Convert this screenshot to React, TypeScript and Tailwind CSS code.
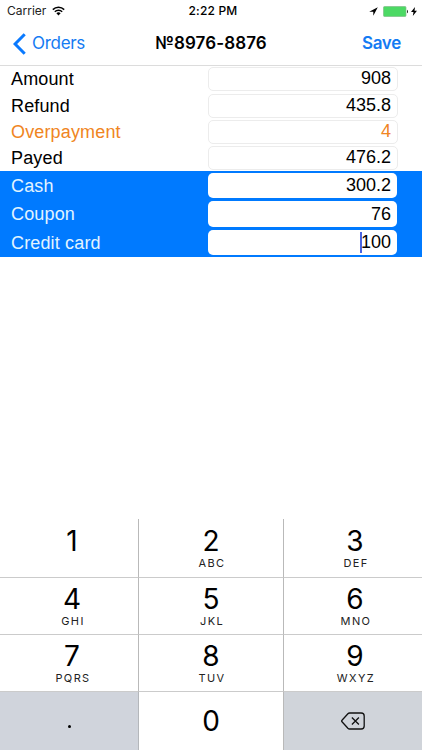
type Row = { label: string; value: string; warn?: boolean; focused?: boolean };

const totals: Row[] = [
  { label: "Amount", value: "908" },
  { label: "Refund", value: "435.8" },
  { label: "Overpayment", value: "4", warn: true },
  { label: "Payed", value: "476.2" },
];

const payments: Row[] = [
  { label: "Cash", value: "300.2" },
  { label: "Coupon", value: "76" },
  { label: "Credit card", value: "100", focused: true },
];

const keys = [
  ["1", ""],
  ["2", "ABC"],
  ["3", "DEF"],
  ["4", "GHI"],
  ["5", "JKL"],
  ["6", "MNO"],
  ["7", "PQRS"],
  ["8", "TUV"],
  ["9", "WXYZ"],
];

function StatusBar() {
  return (
    <div className="grid h-[22px] grid-cols-3 items-center text-[12px] leading-none text-black">
      <div className="flex items-center gap-[6px] pl-[7px]">
        <span className="text-[#222]">Carrier</span>
        <svg width="13" height="10" viewBox="0 0 13 10" fill="none" stroke="#000" strokeWidth="1.5">
          <path d="M.8 3.6a8.2 8.2 0 0 1 11.4 0" />
          <path d="M2.8 5.8a5.3 5.3 0 0 1 7.4 0" />
          <path d="M6.5 9.4 4.4 7.3a3 3 0 0 1 4.2 0z" fill="#000" stroke="none" />
        </svg>
      </div>
      <div className="pl-[4px] text-center font-medium tracking-[0.2px]">2:22 PM</div>
      <div className="flex items-center justify-end pr-[5px]">
        <svg width="9" height="9" viewBox="0 0 9 9" className="mr-[5px]">
          <path d="M8.8.2.2 4.7h4.1v4.1z" fill="#000" />
        </svg>
        <svg width="26" height="11" viewBox="0 0 26 11">
          <rect x=".5" y=".5" width="22.5" height="10" rx="1" fill="#4cd964" stroke="#7fbd88" strokeWidth=".7" />
          <path d="M24 3.7c1.3.5 1.3 3.1 0 3.6z" fill="#222" />
        </svg>
        <svg width="6" height="9" viewBox="0 0 6 9" className="ml-[2px]">
          <path d="M4 0 0 5h2.5L1.8 9 6 3.8H3.5z" fill="#000" />
        </svg>
      </div>
    </div>
  );
}

function NavBar() {
  return (
    <div className="grid h-11 grid-cols-3 items-center border-b border-[#dcdcdc] text-[17px] leading-none text-[#147bf3]">
      <div className="flex items-center gap-[6px] pl-[13px]">
        <svg width="13" height="22" viewBox="0 0 13 22" fill="none" stroke="#0a7aff" strokeWidth="3">
          <path d="M11.7 1.2 2.1 11l9.6 9.8" />
        </svg>
        <span className="tracking-[-0.3px]">Orders</span>
      </div>
      <div className="text-center font-semibold tracking-[0.1px] whitespace-nowrap text-black">№8976-8876</div>
      <div className="pr-[21px] text-right font-semibold tracking-[-0.3px]">Save</div>
    </div>
  );
}

function TotalRow({ label, value, warn }: Row) {
  return (
    <div className={`flex h-[26.4px] items-center justify-between pr-6 pl-[11px] ${warn ? "text-[#f08522]" : "text-black"}`}>
      <span className="pt-px tracking-[0.15px]">{label}</span>
      <div className="h-6 w-[190px] rounded-[5px] border border-[#ececec] bg-white pr-[6px] text-right leading-[21px]">
        {value}
      </div>
    </div>
  );
}

function PaymentRow({ label, value, focused }: Row) {
  return (
    <div className="flex h-[28.5px] items-center justify-between pr-[25px] pl-[11px] text-[#e2f4ff]">
      <span className="pt-[2px] tracking-[0.15px]">{label}</span>
      <div className="flex h-[25.5px] w-[189px] items-center justify-end rounded-[5px] bg-white pr-[6px] text-black">
        {focused && <span className="-mr-px h-[21px] w-[1.5px] bg-[#4a64e0]" />}
        <span className="leading-none">{value}</span>
      </div>
    </div>
  );
}

function Keypad() {
  return (
    <div className="grid h-[231px] grid-cols-[139px_145px_138px] grid-rows-[59px_57px_57px_58px] text-black">
      {keys.map(([digit, letters], i) => (
        <div
          key={digit}
          className={`flex flex-col items-center border-b border-[#cbcbcb] ${i < 3 ? "pt-[8px]" : "pt-[7px]"} ${
            i % 3 === 2 ? "pl-[4px]" : i % 3 === 1 ? "border-r border-r-[#b9b9b9]" : "border-r border-r-[#b9b9b9] pl-[6px]"
          }`}
        >
          <span className="text-[28px] leading-[28px]">{digit}</span>
          {letters && <span className="mt-[2px] pl-[2px] text-[11px] leading-[13px] tracking-[1.4px] text-[#222]">{letters}</span>}
        </div>
      ))}
      <div className="flex items-center justify-center border-r border-[#b4b7bb] bg-[#d0d4dc]">
        <span className="mt-[10px] h-[3px] w-[3px] rounded-full bg-black" />
      </div>
      <div className="flex items-center justify-center border-r border-[#b9b9b9] text-[28px] leading-none">0</div>
      <div className="flex items-center justify-center bg-[#d0d4da]">
        <svg width="24" height="18" viewBox="0 0 24 18" fill="none" stroke="#111" strokeWidth="1.3">
          <path d="M8.6 1h11.6a3 3 0 0 1 3 3v10a3 3 0 0 1-3 3H8.6c-.7 0-1.2-.2-1.7-.7L1 9.7a1 1 0 0 1 0-1.4l5.9-6.6C7.4 1.2 7.9 1 8.6 1z" />
          <path d="m10.9 5.5 7 7m0-7-7 7" />
        </svg>
      </div>
    </div>
  );
}

export default function App() {
  return (
    <div className="flex h-[750px] w-[422px] flex-col overflow-hidden bg-white font-['Inter',sans-serif]">
      <StatusBar />
      <NavBar />
      <div className="font-['Liberation_Sans',sans-serif] text-[18px]">
        <div className="h-[105px]">
          {totals.map((row) => (
            <TotalRow key={row.label} {...row} />
          ))}
        </div>
        <div className="bg-[#007aff]">
          {payments.map((row) => (
            <PaymentRow key={row.label} {...row} />
          ))}
        </div>
      </div>
      <div className="mt-auto">
        <Keypad />
      </div>
    </div>
  );
}
